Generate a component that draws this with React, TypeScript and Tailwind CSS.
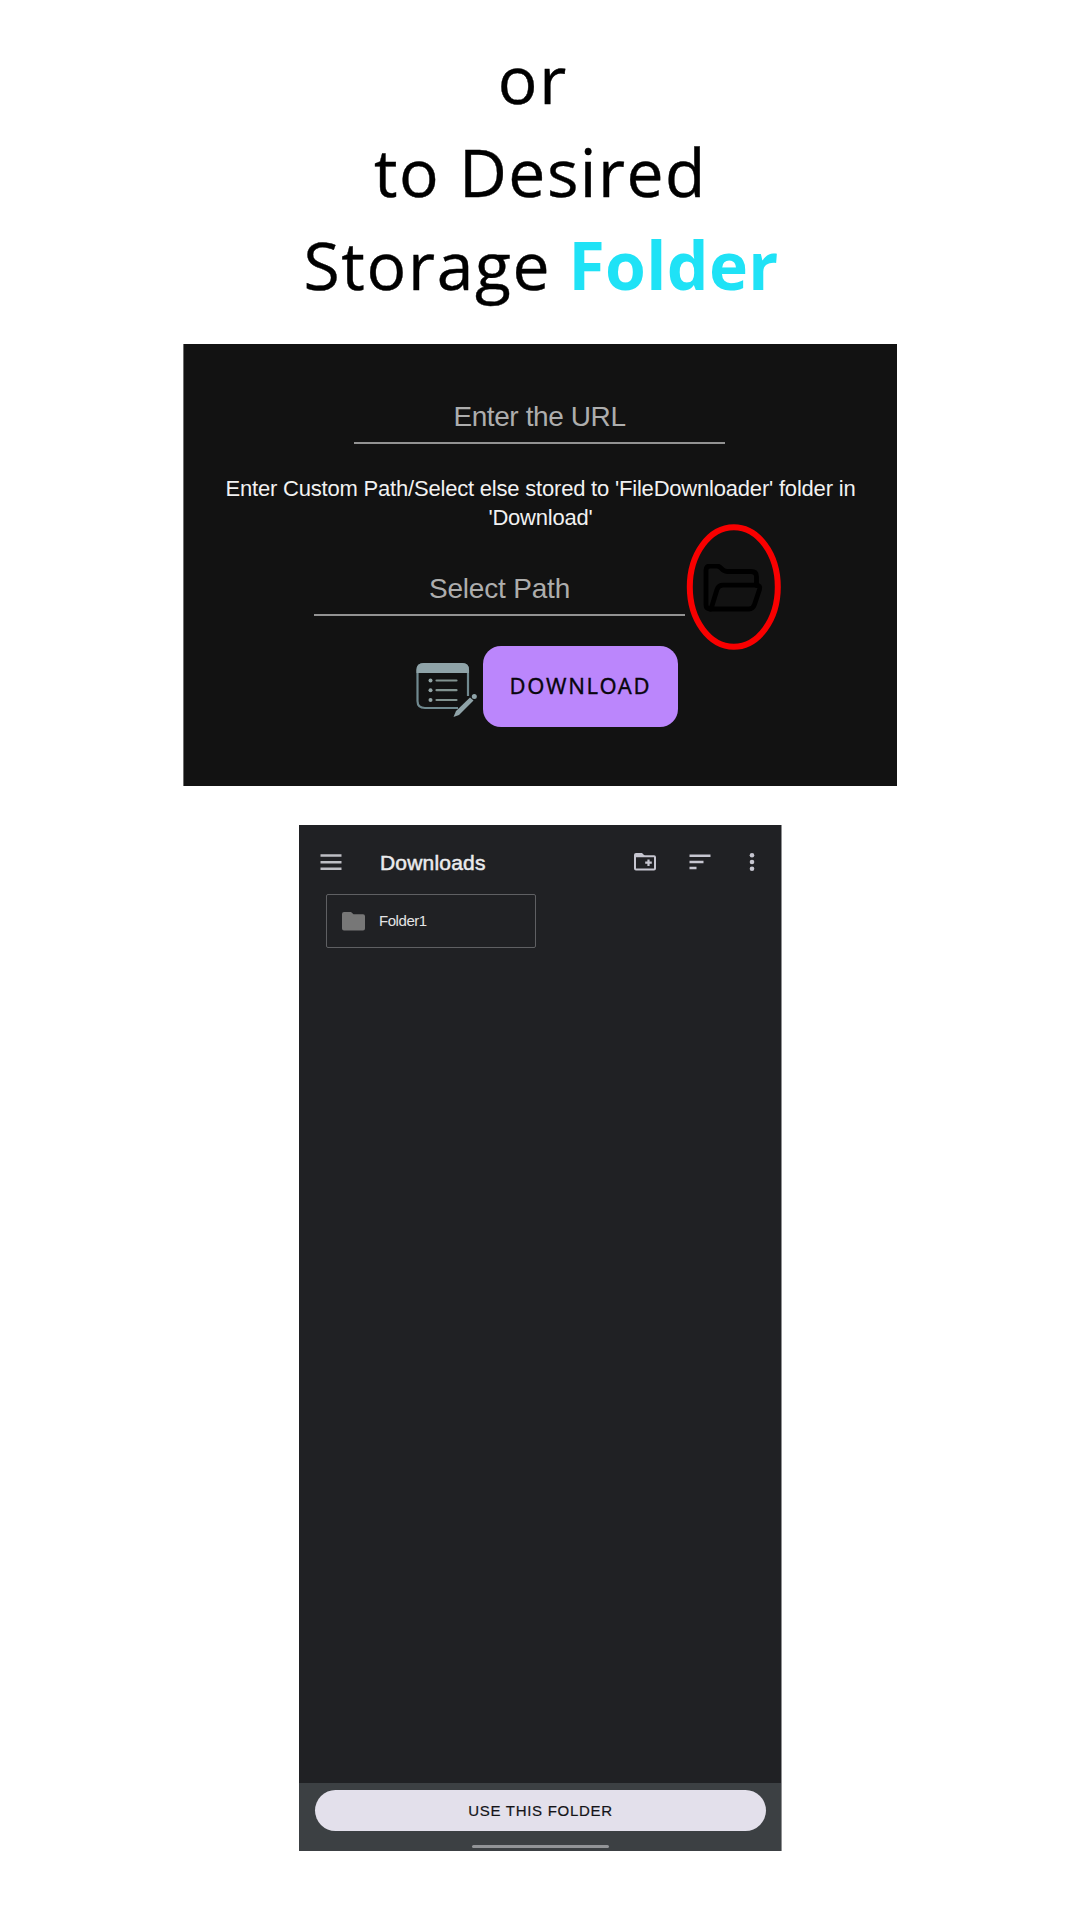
import React from 'react';

function OpenFolderIcon() {
  return (
    <svg className="h-[48px] w-[60px]" viewBox="0 0 60 48" fill="none" stroke="#000" strokeWidth="4.8" strokeLinejoin="round" strokeLinecap="round">
      <path d="M8 45H7Q3 44.500 3 41V6Q3 2 7 2H14C19 2 18 7.500 24 7.500H48Q53.500 7.500 53.500 12.500V21.500" />
      <path d="M8 45 14 25.500Q15.500 21.200 20 21.200H53Q58 21.200 56.500 25.500L51.500 40.500Q50 45 46 45H7" />
    </svg>
  );
}

function NotesIcon() {
  return (
    <svg className="h-[56px] w-[62px]" viewBox="0 0 62 56" fill="none">
      <path d="M52 34V8Q52 2 46.500 2H7.500Q1.500 2 1.500 8V39Q1.500 46 9 46H42" stroke="#70898f" strokeWidth="2.2" />
      <path d="M.5 11V8Q.5 1 8 1H46Q53 1 53 8V11Z" fill="#8fa3a8" />
      <path d="M20.500 18.500H40.500M20.500 28.200H40.500M20.500 38H40.500" stroke="#81928f" strokeWidth="2.200" strokeLinecap="round" />
      <g fill="#93a5a6"><circle cx="14.500" cy="18.500" r="2" /><circle cx="14.500" cy="28.200" r="2" /><circle cx="14.500" cy="38" r="2" /></g>
      <path d="M37.500 55 40 49 54 35.500 57.500 38.500 43 53Z" fill="#8fa3a8" />
      <circle cx="58.300" cy="34.500" r="2.500" fill="#8fa3a8" />
    </svg>
  );
}

function FolderPlusIcon() {
  return (
    <svg className="h-[20px] w-[24px]" viewBox="0 0 24 20" fill="none">
      <path d="M2 4V16.500Q2 17.500 3 17.500H21Q22 17.500 22 16.500V5.200Q22 4.200 21 4.200H2" stroke="#c6c6d0" strokeWidth="2" />
      <path d="M1 5V2.800Q1 1 3 1H9L11.500 3.500V5Z" fill="#c6c6d0" />
      <path d="M15.500 7.500V14M12.200 10.700H18.800" stroke="#c6c6d0" strokeWidth="2.2" />
    </svg>
  );
}

function Heading() {
  return (
    <h1 className="h-[344px] pt-[32px] text-center font-['Open_Sans',sans-serif] text-[66px] leading-[93px] whitespace-pre text-black [-webkit-text-stroke:0.4px_currentColor]">
      <span className="block h-[93px] pr-[14px] tracking-[2px]">or</span>
      <span className="block h-[93px] pl-[1px] tracking-[1.5px]">to Desired</span>
      <span className="block h-[93px] pl-[2px]">
        <span className="tracking-[1.7px]">Storage</span> <b className="font-bold tracking-[0.35px] text-[#1fe2f6] [-webkit-text-stroke:0]">Folder</b>
      </span>
    </h1>
  );
}

function DownloaderCard() {
  return (
    <section className="mx-auto h-[442px] w-[714px] border-l border-[#6e6e6e] bg-[#121212] font-['Liberation_Sans',Arial,sans-serif]">
      <div className="ml-[170px] h-[100px] w-[371px] border-b-2 border-[#929292] pt-[56px] text-center text-[28px] leading-[34px] tracking-[-0.4px] text-[#adadad]">
        Enter the URL
      </div>
      <p className="mt-[31px] text-center text-[22px] leading-[28.500px] tracking-[-0.2px] whitespace-nowrap text-[#f1f1f1]">
        Enter Custom Path/Select else stored to 'FileDownloader' folder in
        <br />
        'Download'
      </p>
      <div className="flex h-[84px] pl-[130px]">
        <div className="h-[84px] w-[371px] border-b-2 border-[#929292] pt-[40px] text-center text-[28px] leading-[34px] tracking-[-0.2px] text-[#adadad]">
          Select Path
        </div>
        <div className="relative ml-[18px] mt-[32px] h-[48px] w-[60px]">
          <OpenFolderIcon />
          <svg className="absolute -left-[17px] -top-[40px] h-[126px] w-[95px]" viewBox="0 0 95 126" fill="none">
            <ellipse cx="47.800" cy="63" rx="44" ry="59.700" stroke="#f90000" strokeWidth="6" />
          </svg>
        </div>
      </div>
      <div className="mt-[30px] flex pl-[232px]">
        <div className="mt-[16px]"><NotesIcon /></div>
        <button className="ml-[5px] h-[81px] w-[195px] rounded-[18px] bg-[#bb86fc] pb-[2px] font-['Noto_Sans',sans-serif] text-[22px] tracking-[1.700px] text-[#09060d] [-webkit-text-stroke:0.3px_#09060d]">
          DOWNLOAD
        </button>
      </div>
    </section>
  );
}

function FilePicker() {
  return (
    <section className="mx-auto mt-[39px] flex h-[1026px] w-[482px] flex-col bg-[#202124] font-['Liberation_Sans',Arial,sans-serif] shadow-[1px_0_0_#8f9092]">
      <header className="flex h-[69px] items-center pt-[5px] pl-[21px]">
        <svg className="h-[16px] w-[22px]" viewBox="0 0 22 16" stroke="#bdbec4" strokeWidth="2.400">
          <path d="M.5 1.500H21.500M.5 8.200H21.500M.5 14.800H21.500" />
        </svg>
        <h2 className="mt-[1px] ml-[38px] w-[253px] text-[21px] leading-[28px] tracking-[0.2px] text-[#ebebed] [-webkit-text-stroke:0.5px_#ebebed]">Downloads</h2>
        <FolderPlusIcon />
        <svg className="ml-[31.500px] h-[16px] w-[22px]" viewBox="0 0 22 16" stroke="#c6c6d0" strokeWidth="2.400">
          <path d="M.5 1.800H21.500M.5 8H14.500M.5 14H7.500" />
        </svg>
        <svg className="ml-[38.500px] h-[20px] w-[6px]" viewBox="0 0 6 20" fill="#c6c6d0">
          <circle cx="3" cy="3.300" r="2.300" />
          <circle cx="3" cy="10" r="2.300" />
          <circle cx="3" cy="16.700" r="2.300" />
        </svg>
      </header>
      <div className="ml-[27px] flex h-[54px] w-[210px] items-center rounded-[2px] border border-[#5f6063] pl-[15px]">
        <svg className="h-[19px] w-[23px]" viewBox="0 0 23 19" fill="#777">
          <path d="M2 0H9L11.500 2.300H21Q23 2.300 23 4.300V16.500Q23 18.500 21 18.500H2Q0 18.500 0 16.500V2Q0 0 2 0Z" />
        </svg>
        <span className="ml-[14px] text-[15px] leading-[20px] tracking-[-0.45px] text-[#e4e4e6]">Folder1</span>
      </div>
      <footer className="mt-auto flex h-[68px] flex-col items-center bg-[#3c4043] pt-[7px]">
        <button className="h-[41px] w-[451px] rounded-full bg-[#e3e0eb] pt-[1px] pl-[1px] text-[15px] tracking-[0.7px] text-[#141418] [-webkit-text-stroke:0.2px_#141418]">
          USE THIS FOLDER
        </button>
        <div className="mt-[14px] h-[3px] w-[137px] rounded-full bg-[#929497]" />
      </footer>
    </section>
  );
}

export default function App() {
  return (
    <main className="h-[1920px] w-[1080px] overflow-hidden bg-white">
      <Heading />
      <DownloaderCard />
      <FilePicker />
    </main>
  );
}
